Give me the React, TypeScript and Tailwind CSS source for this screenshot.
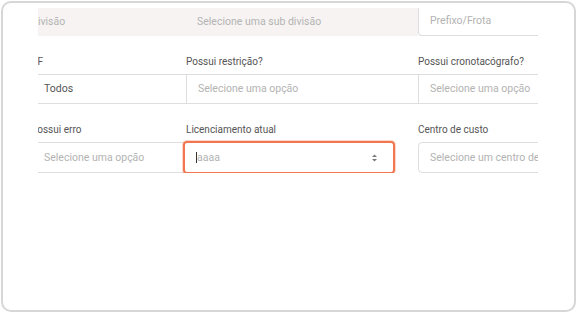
import React from "react";

function SortArrows() {
  return (
    <svg width="7" height="10" viewBox="0 0 7 10" className="text-[#7a7a7a]">
      <path d="M1 4 L3.5 1.5 L6 4 Z" fill="currentColor" />
      <path d="M1 6 L3.5 8.5 L6 6 Z" fill="currentColor" />
    </svg>
  );
}

export default function App() {
  return (
    <div
      className="h-[313px] w-[577px] bg-white p-px"
      style={{ fontFamily: "Roboto, 'Liberation Sans', sans-serif" }}
    >
      <div className="h-[311px] w-[575px] rounded-[10px] border-2 border-[#d7d7d7] bg-white">
        <div className="ml-[35px] mt-[5px] w-[500px] overflow-hidden">
          <div className="ml-[-7px] w-[700px]">
            {/* row 1 */}
            <div className="flex h-[28px]">
              <div className="flex w-[387px] items-center bg-[#f6f3f2] text-[10.5px] text-[#b3b3b3]">
                <span className="w-[155px]">Divisão</span>
                <span className="pl-[11px]">Selecione uma sub divisão</span>
              </div>
              <div className="flex w-[232px] items-center rounded-bl-[4px] border-b border-l border-[#dedede] pb-[2px] pl-[11px] text-[10.5px] text-[#b3b3b3]">
                Prefixo/Frota
              </div>
            </div>

            {/* row 2 */}
            <div className="mt-[19px] flex text-[10px] leading-[14px] text-[#555]">
              <span className="w-[155px]">UF</span>
              <span className="w-[232px]">Possui restrição?</span>
              <span className="w-[232px]">Possui cronotacógrafo?</span>
            </div>
            <div className="mt-[5px] flex h-[30px] text-[10.5px]">
              <div className="flex w-[155px] items-center border-y border-l border-[#dedede] pl-3 text-[#555]">
                Todos
              </div>
              <div className="flex w-[232px] items-center border-y border-l border-[#dedede] pl-[11px] text-[#b3b3b3]">
                Selecione uma opção
              </div>
              <div className="flex w-[232px] items-center border border-[#dedede] pl-[11px] text-[#b3b3b3]">
                Selecione uma opção
              </div>
            </div>

            {/* row 3 */}
            <div className="mt-[19px] flex text-[10px] leading-[14px] text-[#555]">
              <span className="w-[155px]">Possui erro</span>
              <span className="w-[232px]">Licenciamento atual</span>
              <span className="w-[232px]">Centro de custo</span>
            </div>
            <div className="mt-[5px] flex h-[31px] text-[10.5px]">
              <div className="flex w-[155px] items-center border-y border-l border-[#dedede] pl-3 text-[#b3b3b3]">
                Selecione uma opção
              </div>
              <div className="w-[232px]">
                <div className="ml-[-3px] mt-[-1px] flex h-[33px] w-[212px] items-center rounded-[4px] border-2 border-[#f2764f] pl-[11px] pr-[15px] shadow-[0_0_0_1px_rgba(242,118,79,0.3)]">
                  <span className="h-[11px] w-px bg-[#333]" />
                  <span className="text-[#b3b3b3]">aaaa</span>
                  <span className="ml-auto flex">
                    <SortArrows />
                  </span>
                </div>
              </div>
              <div className="flex w-[232px] items-center rounded-[4px] border border-[#dedede] pl-[11px] text-[#b3b3b3]">
                Selecione um centro de custo
              </div>
            </div>
          </div>
        </div>
      </div>
    </div>
  );
}
